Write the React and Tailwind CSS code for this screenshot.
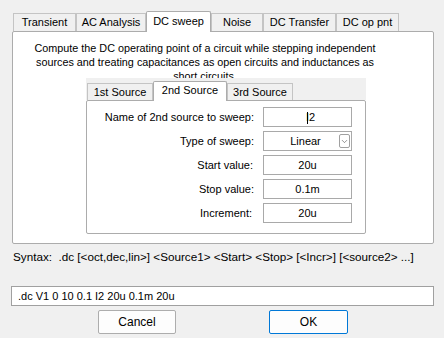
import { ChevronDown } from 'lucide-react';

const outerTabs = [
  { label: 'Transient', w: 'w-[63px]' },
  { label: 'AC Analysis', w: 'w-[70px]' },
  { label: 'DC sweep', w: 'w-[65px]', active: true },
  { label: 'Noise', w: 'w-[52px]' },
  { label: 'DC Transfer', w: 'w-[73px]' },
  { label: 'DC op pnt', w: 'w-[63px]' },
];

const innerTabs = [
  { label: '1st Source', w: 'w-[66px]' },
  { label: '2nd Source', w: 'w-[74px]', active: true },
  { label: '3rd Source', w: 'w-[66px]' },
];

function Box({ children }) {
  return (
    <div className="h-[20px] border border-[#a9a9a9] bg-white flex items-center justify-center">
      {children}
    </div>
  );
}

export default function App() {
  return (
    <div className="w-[444px] h-[338px] bg-[#f0f0f0] pt-[11px] pl-[12px] text-black text-[11px] font-['Liberation_Sans',Arial,sans-serif] overflow-hidden">
      {/* outer tab strip */}
      <div className="flex items-end pl-[1px]">
        {outerTabs.map((t) =>
          t.active ? (
            <div key={t.label} className={`${t.w} h-[21px] -mb-px relative z-10 bg-white border border-b-0 border-[#acacac] rounded-t-[2px] flex items-center justify-center pb-[2px]`}>
              {t.label}
            </div>
          ) : (
            <div key={t.label} className={`${t.w} h-[18px] bg-[#f0f0f0] border border-b-0 border-[#c4c4c4] flex items-center justify-center`}>
              {t.label}
            </div>
          )
        )}
      </div>

      {/* outer panel */}
      <div className="w-[422px] h-[213px] bg-white border border-[#acacac] rounded-[2px]">
        {/* description, last line is hidden behind the inner tabs */}
        <div className="h-[46px] overflow-hidden pt-[9px] ml-[17px] w-[350px] text-center leading-[14px] text-[10.8px]">
          <div className="whitespace-nowrap">Compute the DC operating point of a circuit while stepping independent</div>
          <div className="whitespace-nowrap">sources and treating capacitances as open circuits and inductances as</div>
          <div className="whitespace-nowrap">short circuits.</div>
        </div>

        {/* inner tab control */}
        <div className="ml-[73px] w-[280px]">
          <div className="flex items-end h-[22px] bg-[#f0f0f0] pl-[1px]">
            {innerTabs.map((t) =>
              t.active ? (
                <div key={t.label} className={`${t.w} h-[20px] -mb-px relative z-10 bg-white border border-b-0 border-[#acacac] rounded-t-[2px] flex items-center justify-center pb-[2px]`}>
                  {t.label}
                </div>
              ) : (
                <div key={t.label} className={`${t.w} h-[17px] bg-[#f0f0f0] border border-b-0 border-[#c4c4c4] flex items-center justify-center`}>
                  {t.label}
                </div>
              )
            )}
          </div>
          <div className="h-[134px] bg-white border border-[#acacac] rounded-[2px] pt-[6px]">
            <div className="grid grid-cols-[168px_89px] gap-x-[8px] gap-y-[4px] items-center">
              <div className="text-right pr-[1px]">Name of 2nd source to sweep:</div>
              <Box>
                <span className="pl-[8px]"><span className="inline-block w-px h-[12px] bg-black align-middle -mr-[2px]" />I2</span>
              </Box>

              <div className="text-right pr-[1px]">Type of sweep:</div>
              <div className="h-[20px] border border-[#a9a9a9] bg-white flex items-center">
                <span className="flex-1 text-center pl-[8px]">Linear</span>
                <span className="w-[11px] h-[14px] mr-[1px] border border-[#a0a0a0] rounded-[2px] flex items-center justify-center">
                  <ChevronDown size={9} strokeWidth={1.5} className="text-[#444]" />
                </span>
              </div>

              <div className="text-right pr-[2px]">Start value:</div>
              <Box>20u</Box>

              <div className="text-right pr-[1px]">Stop value:</div>
              <Box>0.1m</Box>

              <div className="text-right pr-[3px]">Increment:</div>
              <Box>20u</Box>
            </div>
          </div>
        </div>
      </div>

      {/* syntax */}
      <div className="mt-[6px] ml-[1px] h-[14px] leading-[14px] text-[11.7px] whitespace-nowrap">
        Syntax:&nbsp; .dc [&lt;oct,dec,lin&gt;] &lt;Source1&gt; &lt;Start&gt; &lt;Stop&gt; [&lt;Incr&gt;] [&lt;source2&gt; ...]
      </div>

      {/* command line */}
      <div className="mt-[22px] -ml-px w-[423px] h-[20px] border border-[#a0a0a0] bg-white flex items-center pl-[6px] text-[11px] whitespace-nowrap">
        .dc V1 0 10 0.1 I2 20u 0.1m 20u
      </div>

      {/* buttons */}
      <div className="mt-[4px] flex text-[12px]">
        <button className="ml-[86px] w-[78px] h-[24px] bg-[#fdfdfd] border border-[#adadad] rounded-[2px]">Cancel</button>
        <button className="ml-[93px] w-[79px] h-[24px] bg-[#fdfdfd] border border-[#0078d7] rounded-[2px]">OK</button>
      </div>
    </div>
  );
}
